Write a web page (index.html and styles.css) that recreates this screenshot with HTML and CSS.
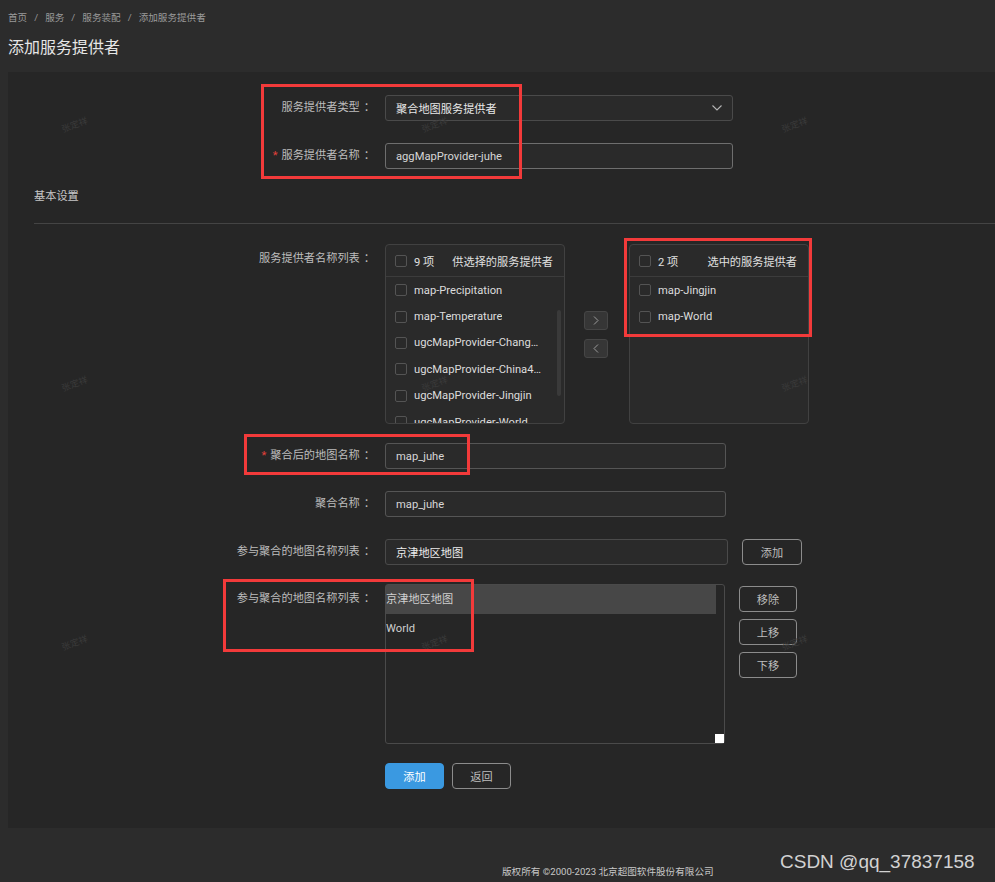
FILE: index.html
```html
<!DOCTYPE html>
<html lang="zh-CN">
<head>
<meta charset="utf-8">
<title>添加服务提供者</title>
<link rel="stylesheet" href="styles.css">
</head>
<body>
<nav class="crumbs">
  <span>首页</span><span class="sep">/</span><span>服务</span><span class="sep">/</span><span>服务装配</span><span class="sep">/</span><span class="cur">添加服务提供者</span>
</nav>
<h1 class="title">添加服务提供者</h1>

<main class="panel">
  <div class="row">
    <label class="lbl">服务提供者类型<span class="colon">：</span></label>
    <div class="ctl select w348">
      <span>聚合地图服务提供者</span>
      <svg class="chev" width="10" height="6" viewBox="0 0 10 6"><path d="M0.5 0.5 L5 5 L9.5 0.5" fill="none" stroke="#b5b5b5" stroke-width="1.1"/></svg>
    </div>
  </div>
  <div class="row">
    <label class="lbl"><span class="star">*</span>服务提供者名称<span class="colon">：</span></label>
    <div class="ctl input hl w348">aggMapProvider-juhe</div>
  </div>

  <div class="section">基本设置</div>

  <div class="row top first-after">
    <label class="lbl lh30">服务提供者名称列表<span class="colon">：</span></label>
    <div class="transfer">
      <div class="tbox">
        <div class="thead"><span class="cb"></span><span>9 项</span><span class="ttitle">供选择的服务提供者</span></div>
        <div class="titem"><span class="cb"></span><span class="tt">map-Precipitation</span></div>
        <div class="titem"><span class="cb"></span><span class="tt">map-Temperature</span></div>
        <div class="titem"><span class="cb"></span><span class="tt">ugcMapProvider-Changsha</span></div>
        <div class="titem"><span class="cb"></span><span class="tt">ugcMapProvider-China400</span></div>
        <div class="titem"><span class="cb"></span><span class="tt">ugcMapProvider-Jingjin</span></div>
        <div class="titem"><span class="cb"></span><span class="tt">ugcMapProvider-World</span></div>
        <span class="thumb"></span>
      </div>
      <div class="tops">
        <span class="tbtn"><svg width="6" height="9" viewBox="0 0 6 9"><path d="M1 0.5 L5 4.5 L1 8.5" fill="none" stroke="#9a9a9a" stroke-width="1"/></svg></span>
        <span class="tbtn"><svg width="6" height="9" viewBox="0 0 6 9"><path d="M5 0.5 L1 4.5 L5 8.5" fill="none" stroke="#9a9a9a" stroke-width="1"/></svg></span>
      </div>
      <div class="tbox">
        <div class="thead"><span class="cb"></span><span>2 项</span><span class="ttitle">选中的服务提供者</span></div>
        <div class="titem"><span class="cb"></span><span class="tt">map-Jingjin</span></div>
        <div class="titem"><span class="cb"></span><span class="tt">map-World</span></div>
      </div>
    </div>
  </div>

  <div class="row gap19">
    <label class="lbl"><span class="star">*</span>聚合后的地图名称<span class="colon">：</span></label>
    <div class="ctl input w341">map_juhe</div>
  </div>
  <div class="row">
    <label class="lbl">聚合名称<span class="colon">：</span></label>
    <div class="ctl input w341">map_juhe</div>
  </div>
  <div class="row">
    <label class="lbl">参与聚合的地图名称列表<span class="colon">：</span></label>
    <div class="ctl input w343 bright">京津地区地图</div>
    <button class="btn add">添加</button>
  </div>
  <div class="row top gap19">
    <label class="lbl lh30">参与聚合的地图名称列表<span class="colon">：</span></label>
    <div class="mlist">
      <div class="mitem sel">京津地区地图</div>
      <div class="mitem">World</div>
      <span class="grip"></span>
    </div>
    <div class="sbtns">
      <button class="btn">移除</button>
      <button class="btn">上移</button>
      <button class="btn">下移</button>
    </div>
  </div>
  <div class="actions">
    <button class="btn primary">添加</button>
    <button class="btn">返回</button>
  </div>
</main>

<footer class="footer">版权所有 ©2000-2023 北京超图软件股份有限公司</footer>

<div class="wmarks">
  <span>张定祥</span><span>张定祥</span><span>张定祥</span>
  <span>张定祥</span><span>张定祥</span><span>张定祥</span>
  <span>张定祥</span><span>张定祥</span><span>张定祥</span>
</div>

<div class="mark m1"></div>
<div class="mark m2"></div>
<div class="mark m3"></div>
<div class="mark m4"></div>

<div class="csdn">CSDN @qq_37837158</div>
</body>
</html>
```

FILE: styles.css
```css
* { box-sizing: border-box; margin: 0; padding: 0; }

body {
  width: 995px;
  height: 882px;
  overflow: hidden;
  position: relative;
  background: #2c2c2c;
  font-family: Roboto, "Noto Sans CJK SC", sans-serif;
  font-size: 11.2px;
  color: #bdbdbd;
}

.crumbs {
  display: flex;
  height: 36px;
  line-height: 36px;
  padding-left: 8px;
  font-size: 9.6px;
  color: #9a9a9a;
}
.crumbs .sep { margin: 0 7px; }

.title {
  height: 24px;
  line-height: 24px;
  padding-left: 8px;
  margin-bottom: 12px;
  font-size: 16px;
  font-weight: normal;
  color: #e6e6e6;
}

.panel {
  margin-left: 8px;
  background: #262626;
  padding: 23px 0 39px;
}

.row {
  display: flex;
  align-items: center;
  gap: 10px;
  margin-top: 22px;
}
.row:first-child { margin-top: 0; }
.row.top { align-items: flex-start; }
.row.first-after { margin-top: 20px; }
.row.gap19 { margin-top: 19px; }

.lbl {
  flex: none;
  width: 367px;
  text-align: right;
  line-height: 26px;
  color: #bdbdbd;
  white-space: nowrap;
}
.lbl.lh30 { line-height: 30px; }
.star { color: #e5413b; margin-right: 4px; }
.colon { margin-left: 4px; }

.ctl {
  flex: none;
  height: 26px;
  display: flex;
  align-items: center;
  padding: 0 10px;
  border: 1px solid #4a4a4a;
  border-radius: 3px;
  background: #2a2a2a;
  color: #d6d6d6;
}
.select { justify-content: space-between; color: #e8e8e8; }
.input.hl { border-color: #6e6e6e; }
.input { border-color: #555; }
.bright { color: #ececec; border-color: #4a4a4a; }
.w348 { width: 348px; }
.w343 { width: 343px; }
.w341 { width: 341px; }

.section {
  margin: 20px 0 0 26px;
  line-height: 16px;
  padding-bottom: 18px;
  border-bottom: 1px solid #444;
  color: #c6c6c6;
}

/* transfer */
.transfer { display: flex; align-items: center; }
.tbox {
  position: relative;
  width: 180px;
  height: 180px;
  overflow: hidden;
  border: 1px solid #414141;
  border-radius: 4px;
  background: #2a2a2a;
}
.thead {
  height: 32px;
  display: flex;
  align-items: center;
  padding: 0 11px 0 9px;
  border-bottom: 1px solid #3c3c3c;
  color: #e0e0e0;
  white-space: nowrap;
}
.ttitle { margin-left: auto; }
.cb {
  flex: none;
  width: 12px;
  height: 12px;
  margin-right: 7px;
  border: 1px solid #545454;
  border-radius: 2px;
  background: #2a2a2a;
}
.titem {
  height: 26.4px;
  display: flex;
  align-items: center;
  padding: 0 22px 0 9px;
  white-space: nowrap;
  color: #dcdcdc;
}
.tt { overflow: hidden; text-overflow: ellipsis; }
.thumb {
  position: absolute;
  right: 3px;
  top: 65px;
  width: 4px;
  height: 86px;
  border-radius: 2px;
  background: #3a3a3a;
}
.tops {
  display: flex;
  flex-direction: column;
  gap: 9px;
  margin: 0 21px 0 19px;
}
.tbtn {
  width: 24px;
  height: 19px;
  display: flex;
  align-items: center;
  justify-content: center;
  border: 1px solid #464646;
  border-radius: 3px;
  background: #363636;
}

/* buttons */
.btn {
  flex: none;
  width: 58px;
  height: 26px;
  border: 1px solid #8c8c8c;
  border-radius: 4px;
  background: transparent;
  color: #bdbdbd;
  font-family: inherit;
  font-size: 11.2px;
}
.btn.add { width: 60px; margin-left: 4px; }
.btn.primary {
  width: 59px;
  background: #3a99e1;
  border-color: #3a99e1;
  color: #fff;
}

/* multi list */
.mlist {
  flex: none;
  position: relative;
  width: 340px;
  height: 160px;
  border: 1px solid #4a4a4a;
  border-radius: 3px;
  background: #262626;
}
.mitem {
  width: 330px;
  height: 29px;
  line-height: 29px;
  color: #cfcfcf;
}
.mitem.sel { background: #474747; }
.grip {
  position: absolute;
  right: 0;
  bottom: 0;
  width: 9px;
  height: 9px;
  background: #fff;
}
.sbtns {
  display: flex;
  flex-direction: column;
  gap: 7px;
  margin: 2px 0 0 4px;
}
.actions {
  display: flex;
  gap: 8px;
  margin: 19px 0 0 377px;
}
.actions .btn { width: 59px; }

.footer {
  height: 54px;
  padding: 37px 0 0 502px;
  line-height: 14px;
  font-size: 9.6px;
  color: #c8c8c8;
  white-space: nowrap;
}

/* overlays */
.wmarks {
  position: absolute;
  left: -105px;
  top: -5px;
  display: grid;
  grid-template-columns: repeat(3, 360px);
  grid-template-rows: repeat(3, 259px);
  pointer-events: none;
}
.wmarks span {
  align-self: center;
  justify-self: center;
  font-size: 9px;
  color: #3a3a3a;
  transform: rotate(-20deg);
}

.mark {
  position: absolute;
  border: 3px solid #f23a3a;
  pointer-events: none;
}
.m1 { left: 261px; top: 84px; width: 261px; height: 95px; }
.m2 { left: 624px; top: 238px; width: 188px; height: 99px; }
.m3 { left: 244px; top: 434px; width: 226px; height: 41px; }
.m4 { left: 223px; top: 579px; width: 251px; height: 73px; }

.csdn {
  position: absolute;
  left: 780px;
  top: 850px;
  line-height: 24px;
  font-family: "Liberation Sans", sans-serif;
  font-size: 19px;
  color: #d2d2d2;
  white-space: nowrap;
}
```
